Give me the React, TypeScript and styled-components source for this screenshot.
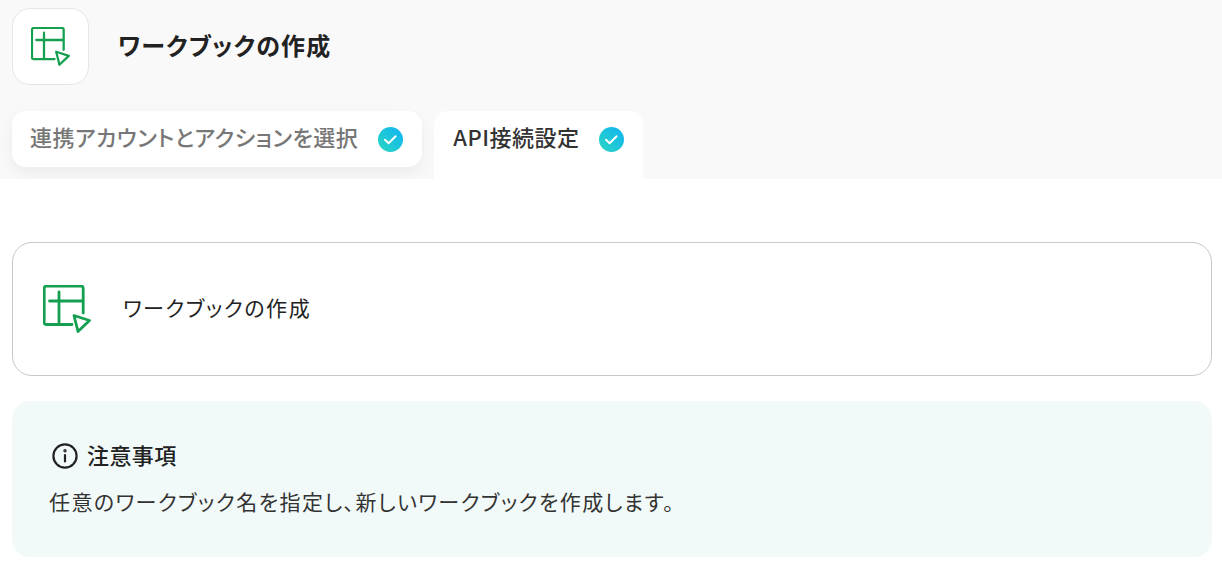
import * as React from 'react'
import styled, { createGlobalStyle } from 'styled-components'

const GlobalStyle = createGlobalStyle`
	html, body {
		margin: 0;
		padding: 0;
		background: #fff;
		font-family: "Noto Sans CJK JP", "Noto Sans", sans-serif;
		font-feature-settings: "palt";
		color: #222;
	}
`

const Header = styled.header`
	background: #f9f9f9;
	height: 179px;
	padding: 8px 12px 0;
	box-sizing: border-box;
	overflow: hidden;
`

const TitleRow = styled.div`
	display: flex;
	align-items: center;
	gap: 29px;
`

const IconBox = styled.div`
	width: 77px;
	height: 77px;
	box-sizing: border-box;
	background: #fff;
	border: 1px solid #e6e6e6;
	border-radius: 18px;
	display: flex;
	align-items: center;
	justify-content: center;
`

const Title = styled.h1`
	margin: 0 0 4px;
	font-size: 24px;
	line-height: 32px;
	font-weight: 700;
	letter-spacing: 1.2px;
	color: #222;
`

const Tabs = styled.div`
	display: flex;
	align-items: flex-start;
	margin-top: 26px;
	gap: 12px;
`

const Tab = styled.div<{ $active?: boolean }>`
	display: flex;
	align-items: center;
	gap: 20px;
	height: ${(p) => (p.$active ? '68px' : '56px')};
	padding: ${(p) => (p.$active ? '0 19px 12px' : '0 19px 0 18px')};
	box-sizing: border-box;
	background: #fff;
	border-radius: ${(p) => (p.$active ? '14px 14px 0 0' : '14px')};
	box-shadow: ${(p) => (p.$active ? 'none' : '0 6px 16px rgba(0, 0, 0, 0.06)')};
	font-size: 22px;
	font-weight: 500;
	letter-spacing: 0.5px;
	color: ${(p) => (p.$active ? '#333' : '#777')};
	white-space: nowrap;
`

const TabLabel = styled.span`
	margin-bottom: 6px;
`

const CheckBadge = styled.span`
	width: 25px;
	height: 25px;
	border-radius: 50%;
	background: linear-gradient(45deg, #2ad6c0, #10b4f5);
	display: flex;
	align-items: center;
	justify-content: center;
	flex-shrink: 0;
`

const Main = styled.main`
	padding: 63px 10px 10px 12px;
	display: flex;
	flex-direction: column;
	gap: 25px;
`

const ActionCard = styled.div`
	height: 134px;
	box-sizing: border-box;
	border: 1px solid #c8c8c8;
	border-radius: 20px;
	display: flex;
	align-items: center;
	gap: 32px;
	padding-left: 30px;
	font-size: 21px;
	letter-spacing: 1.55px;
	color: #222;
`

const ActionLabel = styled.span`
	margin-bottom: 4px;
`

const Notice = styled.section`
	height: 156px;
	box-sizing: border-box;
	background: #f2faf9;
	border-radius: 18px;
	padding: 37px 37px 0;
`

const NoticeHead = styled.div`
	display: flex;
	align-items: center;
	gap: 8px;
	font-size: 22px;
	line-height: 32px;
	font-weight: 500;
	letter-spacing: 0.4px;
	color: #222;
	margin-left: 2px;
`

const NoticeHeadLabel = styled.span`
	margin-bottom: 4px;
`

const NoticeBody = styled.p`
	margin: 11px 0 0;
	font-size: 21px;
	line-height: 32px;
	letter-spacing: 1.44px;
	color: #333;
`

const SheetIcon = ({ size }: { size: number }) => (
	<svg width={size} height={size} viewBox="0 0 48 48" fill="none" stroke="#14a050" strokeWidth="2.8" strokeLinejoin="round" strokeLinecap="round">
		<path d="M29 39.5H3.2a2 2 0 0 1-2-2V3.2a2 2 0 0 1 2-2h35a2 2 0 0 1 2 2V28" />
		<path d="M6.5 16H40M16 7v32" />
		<path d="M31 30.5l15.5 5-11.5 11z" />
	</svg>
)

const Check = () => (
	<svg width="15" height="15" viewBox="0 0 15 15" fill="none" stroke="#fff" strokeWidth="2" strokeLinecap="round" strokeLinejoin="round">
		<path d="M2 7.8l3.6 3.4 7-7" />
	</svg>
)

const InfoIcon = () => (
	<svg width="28" height="28" viewBox="0 0 28 28" fill="none" stroke="#222" strokeWidth="2.2" strokeLinecap="round">
		<circle cx="14" cy="14" r="11.6" />
		<path d="M14 13v6.5" />
		<circle cx="14" cy="8.8" r="0.6" fill="#222" />
	</svg>
)

export default function App() {
	return (
		<>
			<GlobalStyle />
			<Header>
				<TitleRow>
					<IconBox>
						<SheetIcon size={39} />
					</IconBox>
					<Title>ワークブックの作成</Title>
				</TitleRow>
				<Tabs>
					<Tab>
						<TabLabel>連携アカウントとアクションを選択</TabLabel>
						<CheckBadge>
							<Check />
						</CheckBadge>
					</Tab>
					<Tab $active>
						<TabLabel>API接続設定</TabLabel>
						<CheckBadge>
							<Check />
						</CheckBadge>
					</Tab>
				</Tabs>
			</Header>
			<Main>
				<ActionCard>
					<SheetIcon size={48} />
					<ActionLabel>ワークブックの作成</ActionLabel>
				</ActionCard>
				<Notice>
					<NoticeHead>
						<InfoIcon />
						<NoticeHeadLabel>注意事項</NoticeHeadLabel>
					</NoticeHead>
					<NoticeBody>任意のワークブック名を指定し、新しいワークブックを作成します。</NoticeBody>
				</Notice>
			</Main>
		</>
	)
}
